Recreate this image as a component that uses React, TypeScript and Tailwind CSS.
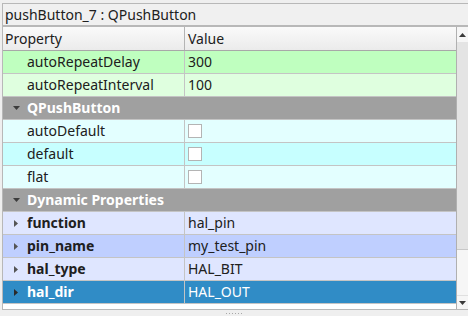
type Row =
  | { kind: "prop"; name: string; value?: string; check?: boolean; bg: string }
  | { kind: "group"; name: string }
  | { kind: "dyn"; name: string; value: string; bg: string; selected?: boolean };

const rows: Row[] = [
  { kind: "prop", name: "autoRepeatDelay", value: "300", bg: "bg-[#bfffbf]" },
  { kind: "prop", name: "autoRepeatInterval", value: "100", bg: "bg-[#dfffdf]" },
  { kind: "group", name: "QPushButton" },
  { kind: "prop", name: "autoDefault", check: true, bg: "bg-[#e3ffff]" },
  { kind: "prop", name: "default", check: true, bg: "bg-[#c7ffff]" },
  { kind: "prop", name: "flat", check: true, bg: "bg-[#e3ffff]" },
  { kind: "group", name: "Dynamic Properties" },
  { kind: "dyn", name: "function", value: "hal_pin", bg: "bg-[#dfe6ff]" },
  { kind: "dyn", name: "pin_name", value: "my_test_pin", bg: "bg-[#bfcfff]" },
  { kind: "dyn", name: "hal_type", value: "HAL_BIT", bg: "bg-[#dfe6ff]" },
  { kind: "dyn", name: "hal_dir", value: "HAL_OUT", bg: "bg-[#308cc6]", selected: true },
];

const DownArrow = ({ color }: { color: string }) => (
  <svg width="7" height="4" viewBox="0 0 7 4">
    <path d="M0 0 L7 0 L3.5 4 Z" fill={color} />
  </svg>
);

const RightArrow = ({ color }: { color: string }) => (
  <svg width="4" height="7" viewBox="0 0 4 7">
    <path d="M0 0 L4 3.5 L0 7 Z" fill={color} />
  </svg>
);

const Checkbox = () => (
  <div className="h-[14px] w-[14px] border border-[#b4b4b4] bg-white" />
);

function TreeRow({ row }: { row: Row }) {
  if (row.kind === "group") {
    return (
      <div className="flex h-[23px] shrink-0 items-center border-b border-[#c4c4c4] bg-[#a0a0a0] font-bold text-white">
        <div className="flex w-[24px] justify-center pl-[2px]">
          <DownArrow color="#3c3c3c" />
        </div>
        <span>{row.name}</span>
      </div>
    );
  }
  const sel = row.kind === "dyn" && row.selected;
  return (
    <div
      className={`flex h-[23px] shrink-0 border-b border-[#c4c4c4] ${row.bg} ${
        sel ? "text-white" : ""
      }`}
    >
      <div className="flex w-[182px] shrink-0 items-center border-r border-[#c4c4c4]">
        <div className="flex w-[24px] justify-center pl-[2px]">
          {row.kind === "dyn" && <RightArrow color={sel ? "#2a2a2a" : "#555555"} />}
        </div>
        <span className={row.kind === "dyn" ? "font-bold" : ""}>{row.name}</span>
      </div>
      <div className="flex flex-1 items-center pl-[3px]">
        {row.kind === "prop" && row.check ? <Checkbox /> : <span>{row.value}</span>}
      </div>
    </div>
  );
}

export default function App() {
  return (
    <div className="flex h-[316px] w-[468px] flex-col overflow-hidden bg-[#efefef] pl-[2px] pt-[3px] font-['Noto_Sans',sans-serif] text-[14px] leading-none text-[#202020]">
      <div className="flex h-[23px] shrink-0 items-center border border-r-0 border-[#b8b8b8] bg-[#f0f0f0] pl-[2px]">
        pushButton_7 : QPushButton
      </div>
      <div className="flex h-[284px] shrink-0 border border-r-0 border-[#b8b8b8] bg-white">
        <div className="flex w-[453px] shrink-0 flex-col">
          <div className="flex h-[24px] shrink-0 border-b border-[#a8a8a8] bg-gradient-to-b from-[#fafafa] to-[#ebebeb]">
            <div className="flex w-[182px] shrink-0 items-center border-r border-[#b4b4b4] pl-[2px]">
              Property
            </div>
            <div className="flex flex-1 items-center pl-[3px]">Value</div>
          </div>
          {rows.map((r) => (
            <TreeRow key={r.name} row={r} />
          ))}
        </div>
        <div className="flex w-[12px] shrink-0 flex-col border-l border-[#b0b0b0]">
          <div className="flex h-[15px] shrink-0 items-center justify-center bg-[#f6f6f6]">
            <svg width="7" height="4" viewBox="0 0 7 4">
              <path d="M0 4 L7 4 L3.5 0 Z" fill="#3a3a3a" />
            </svg>
          </div>
          <div className="h-[207px] shrink-0 bg-[#e4e4e4]" />
          <div className="h-[46px] shrink-0 border-t border-[#c8c8c8] bg-[#f6f6f6]" />
          <div className="flex flex-1 items-center justify-center border-t border-[#e0e0e0] bg-[#f6f6f6]">
            <DownArrow color="#3a3a3a" />
          </div>
        </div>
      </div>
      <div className="flex flex-1 items-center justify-center gap-[2px] pr-[2px]">
        {[0, 1, 2, 3, 4, 5].map((i) => (
          <div key={i} className="h-[1px] w-[1px] bg-[#a8a8a8]" />
        ))}
      </div>
    </div>
  );
}
